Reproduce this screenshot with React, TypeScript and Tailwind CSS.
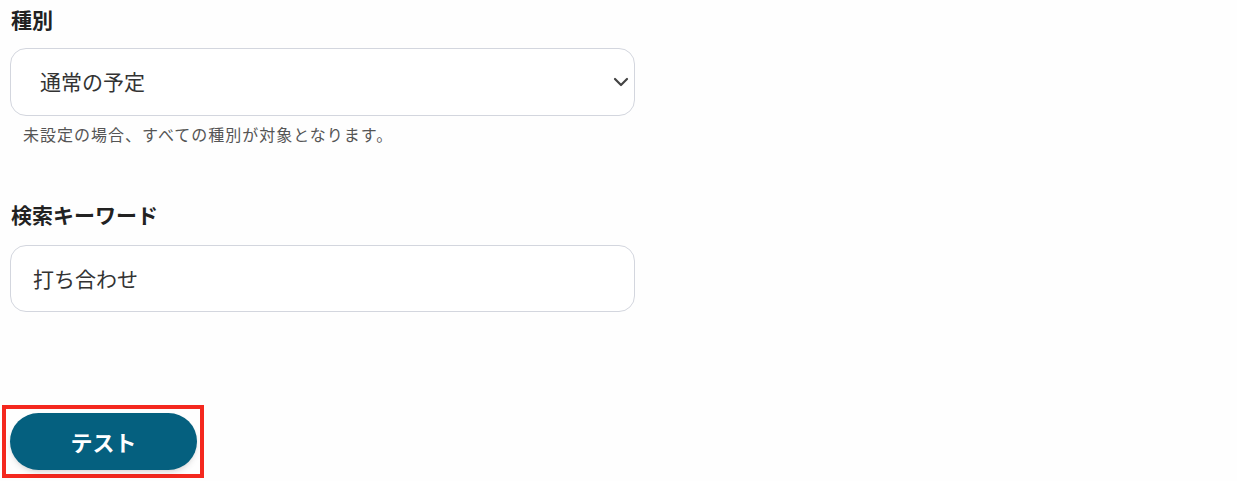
export default function App() {
  return (
    <div
      className="min-h-[481px] w-[1237px] bg-[#fefefe] pl-[10px] text-[#222]"
      style={{ fontFamily: '"Noto Sans CJK JP", "Noto Sans", sans-serif' }}
    >
      <div className="flex h-[40px] items-center pl-px text-[21px] font-bold">種別</div>
      <div className="mt-[8px] flex h-[68px] w-[625px] items-center justify-between rounded-[16px] border border-[#d3d6de] bg-white pl-[29px] pr-[5px]">
        <span className="text-[21px] text-[#333]">通常の予定</span>
        <svg width="16" height="10" viewBox="0 0 16 10" fill="none">
          <path d="M2 2l6 6 6-6" stroke="#444" strokeWidth="2.2" strokeLinecap="round" strokeLinejoin="round" />
        </svg>
      </div>
      <div className="mt-[8px] h-[20px] pl-[13px] text-[16px] leading-[20px] tracking-[1px] text-[#555]">
        未設定の場合、すべての種別が対象となります。
      </div>
      <div className="mt-[51px] flex h-[40px] items-center pl-px text-[21px] font-bold">検索キーワード</div>
      <div className="mt-[10px] flex h-[67px] w-[625px] items-center rounded-[16px] border border-[#d3d6de] bg-white pl-[22px]">
        <span className="text-[21px] text-[#333]">打ち合わせ</span>
      </div>
      <div className="ml-[-8px] mt-[93px] inline-block border-[4px] border-[#f4281e] p-[4px] pr-[3px]">
        <button className="flex h-[57px] w-[187px] items-center justify-center rounded-full bg-[#05607f] text-[22px] font-bold text-white shadow-md">
          テスト
        </button>
      </div>
    </div>
  )
}
